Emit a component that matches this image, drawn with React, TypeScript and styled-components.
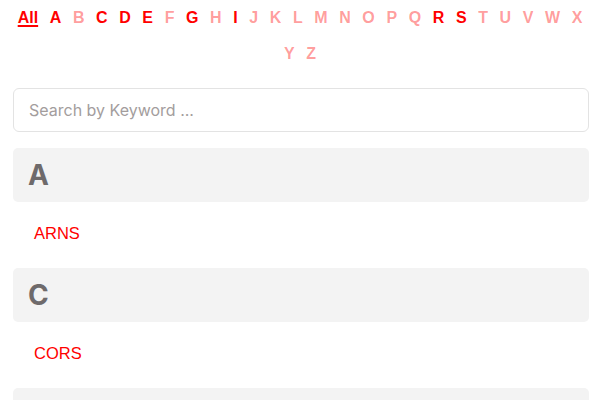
import React from "react";
import styled, { createGlobalStyle } from "styled-components";

const Global = createGlobalStyle`
  html, body { margin: 0; padding: 0; background: #fff; }
  body { font-family: Inter, "Noto Sans", sans-serif; }
  * { box-sizing: border-box; }
`;

const Page = styled.div`
  display: flex;
  flex-direction: column;
`;

const Content = styled.div`
  padding: 0 11px 0 13px;
`;

const AlphaBar = styled.nav`
  display: flex;
  flex-wrap: wrap;
  justify-content: center;
  padding: 0 8px;
`;

const Letter = styled.a<{ $state: "current" | "on" | "off" }>`
  font-family: "Liberation Sans", Arial, sans-serif;
  font-weight: 700;
  font-size: 16px;
  line-height: 36px;
  padding: 0 5.8px;
  color: ${(p) => (p.$state === "off" ? "rgba(255,0,0,0.4)" : "#ff0000")};
  text-decoration: ${(p) => (p.$state === "current" ? "underline" : "none")};
  text-underline-offset: 2px;
  text-decoration-thickness: 2px;
`;

const Search = styled.input`
  display: block;
  width: 100%;
  height: 44px;
  margin-top: 16px;
  border: 1px solid #e3e3e3;
  border-radius: 6px;
  padding: 0 15px;
  font-family: Inter, sans-serif;
  font-size: 16px;
  color: #333;
  outline: none;
  &::placeholder { color: #a39d9d; }
`;

const Groups = styled.div`
  margin-top: 16px;
`;

const GroupHeader = styled.div`
  background: #f3f3f3;
  border-radius: 5px;
  height: 54px;
  display: flex;
  align-items: center;
  padding: 0 15px;
  font-family: Inter, sans-serif;
  font-weight: 700;
  font-size: 28px;
  color: #6e6a6b;
`;

const Item = styled.a`
  display: block;
  padding: 19px 21px 23px;
  line-height: 24px;
  font-family: "Liberation Sans", Arial, sans-serif;
  font-size: 16.5px;
  color: #ff0000;
  text-decoration: none;
`;

const letters = "ABCDEFGHIJKLMNOPQRSTUVWXYZ".split("");
const active = new Set(["A", "C", "D", "E", "G", "I", "R", "S"]);

const groups = [
  { key: "A", items: ["ARNS"] },
  { key: "C", items: ["CORS"] },
  { key: "D", items: ["DAIS"] },
];

export default function App() {
  return (
    <Page>
      <Global />
      <AlphaBar>
        <Letter $state="current" href="#">All</Letter>
        {letters.map((l) => (
          <Letter key={l} $state={active.has(l) ? "on" : "off"} href="#">
            {l}
          </Letter>
        ))}
      </AlphaBar>
      <Content>
        <Search placeholder="Search by Keyword ..." />
        <Groups>
          {groups.map((g) => (
            <div key={g.key}>
              <GroupHeader>{g.key}</GroupHeader>
              {g.items.map((i) => (
                <Item key={i} href="#">{i}</Item>
              ))}
            </div>
          ))}
        </Groups>
      </Content>
    </Page>
  );
}
